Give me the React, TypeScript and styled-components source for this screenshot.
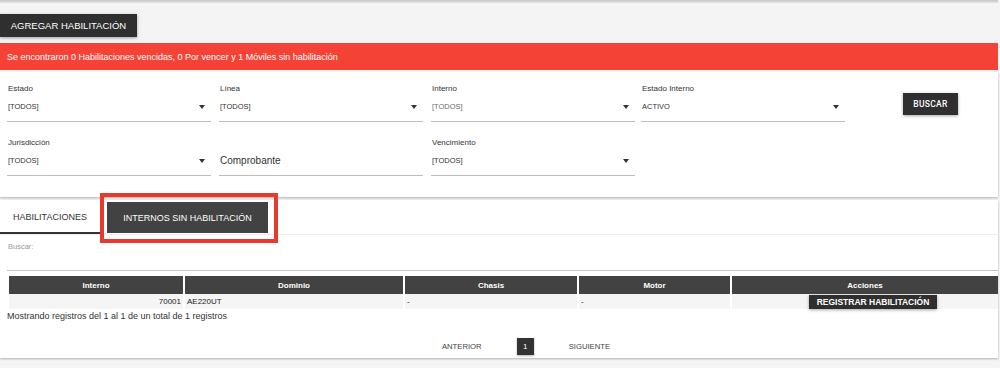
import React from 'react';
import styled, { createGlobalStyle } from 'styled-components';

const Global = createGlobalStyle`
  html, body { margin: 0; padding: 0; background: #f4f4f4; }
  body {
    font-family: "Liberation Sans", Arial, sans-serif;
    color: #222;
    width: 1000px;
    height: 368px;
    overflow: hidden;
  }
  * { box-sizing: border-box; }
`;

const Page = styled.div`
  width: 998px;
  display: flex;
  flex-direction: column;
`;

const TopEdge = styled.div`
  height: 3px;
  background: linear-gradient(#c4c4c4, #e6e6e6);
`;

const DarkButton = styled.button<{ $h?: number; $fs?: number }>`
  border: none;
  background: #2f2f2f;
  color: #fff;
  font-family: "Liberation Sans", Arial, sans-serif;
  font-size: ${(p) => p.$fs ?? 9.5}px;
  height: ${(p) => p.$h ?? 23}px;
  padding: 0 10px;
  box-shadow: 0 1px 3px rgba(0, 0, 0, 0.35);
  cursor: pointer;
  white-space: nowrap;
`;

const AddButton = styled(DarkButton)`
  align-self: flex-start;
  margin-top: 11px;
  width: 137px;
  padding: 0;
`;

const Alert = styled.div`
  margin-top: 6px;
  height: 27px;
  background: #f44336;
  color: #fff;
  font-size: 9px;
  display: flex;
  align-items: center;
  padding-left: 7px;
`;

const Card = styled.div<{ $mt: number; $h: number }>`
  margin-top: ${(p) => p.$mt}px;
  height: ${(p) => p.$h}px;
  background: #fff;
  box-shadow: 0 1px 2px rgba(0, 0, 0, 0.28);
`;

const FilterGrid = styled.div`
  display: grid;
  grid-template-columns: 212px 212px 210px 205px auto;
  grid-auto-rows: 54px;
  padding-left: 7px;
`;

const Field = styled.div`
  width: 204px;
  padding-top: 12px;
  display: flex;
  flex-direction: column;
`;

const Label = styled.div`
  font-size: 8px;
  line-height: 10px;
  color: #333;
  padding-left: 1px;
`;

const Select = styled.div<{ $muted?: boolean; $big?: boolean }>`
  margin-top: 1px;
  height: 27px;
  border-bottom: 1px solid #bdbdbd;
  display: flex;
  align-items: center;
  justify-content: space-between;
  padding: 0 6px 3px 1px;
  font-size: ${(p) => (p.$big ? 10 : 7.5)}px;
  color: ${(p) => (p.$muted ? '#6d6d6d' : '#333')};
`;

const Spacer = styled.div`
  height: 10px;
`;

const Caret = styled.span`
  width: 0;
  height: 0;
  border-left: 3.5px solid transparent;
  border-right: 3.5px solid transparent;
  border-top: 4px solid #333;
`;

const SearchButton = styled(DarkButton)`
  font-family: Roboto, "Liberation Sans", sans-serif;
  font-weight: 500;
  font-size: 8.5px;
  letter-spacing: 0.3px;
  width: 55px;
  height: 22px;
  padding: 0;
  margin-left: 57px;
  margin-top: 21px;
  align-self: start;
`;

const Tabs = styled.div`
  height: 35px;
  display: flex;
  align-items: flex-end;
  gap: 7px;
  border-bottom: 1px solid #eeeeee;
`;

const Tab = styled.div<{ $active?: boolean }>`
  display: flex;
  align-items: center;
  justify-content: center;
  font-size: 9px;
  position: relative;
  width: ${(p) => (p.$active ? 161 : 100)}px;
  margin-bottom: ${(p) => (p.$active ? 1 : 0)}px;
  background: ${(p) => (p.$active ? '#424242' : 'transparent')};
  color: ${(p) => (p.$active ? '#fff' : '#333')};
  border-bottom: ${(p) => (p.$active ? 'none' : '2px solid #333')};
  height: ${(p) => (p.$active ? 31 : 34)}px;
  padding-top: ${(p) => (p.$active ? 0 : 2)}px;
  ${(p) =>
    p.$active &&
    `
    &::after {
      content: '';
      position: absolute;
      top: -9px;
      left: -7px;
      right: -10px;
      bottom: -10px;
      border: 4px solid #e8392f;
      pointer-events: none;
    }
  `}
`;

const Body = styled.div`
  padding-left: 7px;
  display: flex;
  flex-direction: column;
`;

const SearchLabel = styled.div`
  margin-top: 8px;
  font-size: 7.5px;
  line-height: 8px;
  color: #9a9a9a;
  padding-left: 1px;
`;

const SearchInput = styled.div`
  height: 20px;
  border-bottom: 1px solid #c4c4c4;
`;

const Table = styled.table`
  margin-top: 5px;
  width: 993px;
  border-collapse: separate;
  border-spacing: 2px 0;
  table-layout: fixed;
  font-size: 8px;
`;

const Th = styled.th`
  background: #424242;
  color: #fff;
  font-weight: bold;
  height: 18px;
  padding: 0;
  text-align: center;
  font-size: 8px;
`;

const Td = styled.td<{ $align?: string }>`
  background: #f5f5f5;
  height: 15px;
  padding: 0 2px;
  color: #222;
  text-align: ${(p) => p.$align ?? 'left'};
`;

const RowButton = styled(DarkButton)`
  font-weight: bold;
  font-size: 8.5px;
  height: 14px;
  width: 128px;
  padding: 0;
  margin-left: 75px;
  display: block;
`;

const Info = styled.div`
  margin-top: 1px;
  font-size: 9px;
  line-height: 12px;
  color: #333;
`;

const Pager = styled.div`
  margin-top: 15px;
  height: 18px;
  display: flex;
  align-items: center;
  justify-content: center;
  gap: 35px;
  padding-left: 47px;
  font-size: 7.7px;
  color: #444;
`;

const PageNum = styled.span`
  width: 17px;
  height: 17px;
  background: #333;
  color: #fff;
  display: flex;
  align-items: center;
  justify-content: center;
  font-size: 8px;
  box-shadow: 0 1px 2px rgba(0, 0, 0, 0.3);
`;

export default function App() {
  return (
    <>
      <Global />
      <Page>
        <TopEdge />
        <AddButton>AGREGAR HABILITACIÓN</AddButton>
        <Alert>Se encontraron 0 Habilitaciones vencidas, 0 Por vencer y 1 Móviles sin habilitación</Alert>
        <Card $mt={2} $h={125}>
          <FilterGrid>
            <Field>
              <Label>Estado</Label>
              <Select>[TODOS]<Caret /></Select>
            </Field>
            <Field>
              <Label>Línea</Label>
              <Select>[TODOS]<Caret /></Select>
            </Field>
            <Field>
              <Label>Interno</Label>
              <Select $muted>[TODOS]<Caret /></Select>
            </Field>
            <Field>
              <Label>Estado Interno</Label>
              <Select>ACTIVO<Caret /></Select>
            </Field>
            <SearchButton>BUSCAR</SearchButton>
            <Field>
              <Label>Jurisdicción</Label>
              <Select>[TODOS]<Caret /></Select>
            </Field>
            <Field>
              <Spacer />
              <Select $big>Comprobante</Select>
            </Field>
            <Field>
              <Label>Vencimiento</Label>
              <Select>[TODOS]<Caret /></Select>
            </Field>
          </FilterGrid>
        </Card>
        <Card $mt={3} $h={158}>
          <Tabs>
            <Tab>HABILITACIONES</Tab>
            <Tab $active>INTERNOS SIN HABILITACIÓN</Tab>
          </Tabs>
          <Body>
            <SearchLabel>Buscar:</SearchLabel>
            <SearchInput />
            <Table>
              <colgroup>
                <col style={{ width: 174 }} />
                <col style={{ width: 218 }} />
                <col style={{ width: 172 }} />
                <col style={{ width: 151 }} />
                <col style={{ width: 266 }} />
              </colgroup>
              <thead>
                <tr>
                  <Th>Interno</Th>
                  <Th>Dominio</Th>
                  <Th>Chasis</Th>
                  <Th>Motor</Th>
                  <Th>Acciones</Th>
                </tr>
              </thead>
              <tbody>
                <tr>
                  <Td $align="right">70001</Td>
                  <Td>AE220UT</Td>
                  <Td>-</Td>
                  <Td>-</Td>
                  <Td>
                    <RowButton>REGISTRAR HABILITACIÓN</RowButton>
                  </Td>
                </tr>
              </tbody>
            </Table>
            <Info>Mostrando registros del 1 al 1 de un total de 1 registros</Info>
            <Pager>
              <span>ANTERIOR</span>
              <PageNum>1</PageNum>
              <span>SIGUIENTE</span>
            </Pager>
          </Body>
        </Card>
      </Page>
    </>
  );
}
